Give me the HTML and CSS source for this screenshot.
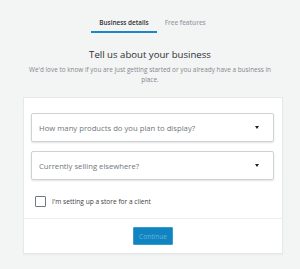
FILE: index.html
```html
<!DOCTYPE html>
<html>
<head>
    <title>Business details</title>
    <link rel="stylesheet" href="styles.css">
</head>
<body>
    <div class="tabs">
        <div class="tab active">Business details</div>
        <div class="tab">Free features</div>
    </div>

    <div class="intro">
        <h1>Tell us about your business</h1>
        <p>We'd love to know if you are just getting started or you already have a business in place.</p>
    </div>

    <div class="card">
        <div class="card-body">
            <div class="select">
                <span>How many products do you plan to display?</span>
                <span class="arrow"></span>
            </div>
            <div class="select">
                <span>Currently selling elsewhere?</span>
                <span class="arrow"></span>
            </div>
            <label class="check">
                <span class="box"></span>
                <span>I'm setting up a store for a client</span>
            </label>
        </div>
        <div class="card-footer">
            <button class="continue" disabled>Continue</button>
        </div>
    </div>
</body>
</html>
```

FILE: styles.css
```css
* { margin: 0; padding: 0; box-sizing: border-box; }
body { font-family: 'Open Sans', 'Noto Sans', sans-serif; background: #f3f4f4; color: #1e1e1e; height: 100vh; }
.tabs { display: flex; justify-content: center; padding-top: 14px; padding-left: 5px; }
.tab { padding: 0 8px; height: 19px; font-size: 6.4px; font-weight: 600; color: #9aa1a7; line-height: 17px; border-bottom: 2px solid transparent; }
.tab.active { color: #2b2f33; border-bottom-color: #1b87c5; }
.intro { text-align: center; padding-top: 14px; }
.intro h1 { font-size: 9.6px; font-weight: 400; color: #2b2f33; line-height: 16px; }
.intro p { font-size: 6.4px; color: #82888e; line-height: 10px; margin: 2px auto 0; width: 250px; }
.card { margin: 12px 17px 0 23px; background: #fff; border: 1px solid #e7e8e9; box-shadow: 0 1px 1px rgba(0,0,0,0.04); }
.card-body { padding: 15px 8px 11px 7px; border-bottom: 1px solid #eceded; }
.select { height: 29px; border: 1px solid #cfd2d4; border-radius: 2px; box-shadow: 0 1px 2px rgba(0,0,0,0.12); display: flex; align-items: center; justify-content: space-between; padding: 0 14px 0 7px; font-size: 7.7px; color: #70767c; margin-bottom: 9px; }
.arrow { width: 0; height: 0; border-left: 2.5px solid transparent; border-right: 2.5px solid transparent; border-top: 3px solid #1e1e1e; }
.check { display: flex; align-items: center; gap: 6px; font-size: 6.6px; color: #3c4146; padding: 7px 0 0 4px; }
.box { width: 11px; height: 11px; border: 1px solid #73787d; border-radius: 1px; background: #fff; }
.card-footer { display: flex; justify-content: center; padding: 8px 0 8px; }
.continue { font-family: inherit; background: #0f84c0; border: 1px solid #3b9bd0; color: #69b4dc; font-size: 6.6px; padding: 0 5px; width: 40px; height: 18px; border-radius: 1px; }
```
